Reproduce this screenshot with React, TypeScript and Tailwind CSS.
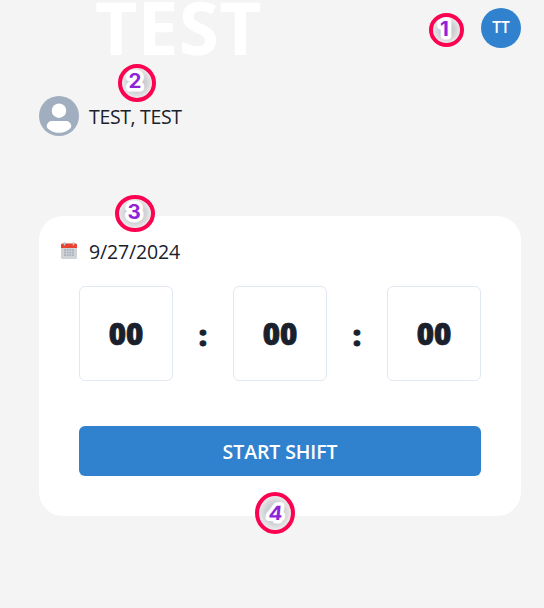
import React from "react";

type MarkerProps = { label: string; w: number; h: number; dx?: number; dy?: number; tilt?: number; place: string };

function Marker({ label, w, h, dx = 0, dy = 0, tilt = 0, place }: MarkerProps) {
  const x = w / 2 + dx;
  const y = h / 2 + 6 + dy;
  return (
    <svg className={`absolute overflow-visible ${place}`} width={w} height={h} viewBox={`0 0 ${w} ${h}`}>
      <defs>
        <radialGradient id={`glow${label}`}>
          <stop offset="0" stopColor="#b8babf" />
          <stop offset="0.6" stopColor="#d3d4d7" />
          <stop offset="1" stopColor="#f4f4f5" />
        </radialGradient>
      </defs>
      <ellipse cx={w / 2} cy={h / 2} rx={w / 2 - 2} ry={h / 2 - 2} fill={`url(#glow${label})`} stroke="#fb0350" strokeWidth="4" />
      <text
        transform={`translate(${x} ${y}) skewX(${tilt}) scale(1.05 1)`}
        textAnchor="middle"
        fontSize="19.5"
        fill="#8f24d6"
        stroke="#fff"
        strokeWidth="7"
        strokeLinejoin="round"
        paintOrder="stroke"
        className="font-['Inter',sans-serif] font-bold"
      >
        {label}
      </text>
    </svg>
  );
}

function UserIcon() {
  return (
    <svg width="40" height="40" viewBox="0 0 40 40">
      <circle cx="20" cy="20" r="20" fill="#a0aec0" />
      <circle cx="20" cy="14.7" r="7.2" fill="#fff" />
      <path d="M7.800 30.500c0-3.500 2.200-5.500 5.700-5.500h13c3.500 0 5.700 2 5.700 5.500 0 2.500-6 6.300-12.200 6.300S7.800 33 7.800 30.500Z" fill="#fff" />
    </svg>
  );
}

function CalendarIcon() {
  return (
    <svg width="16" height="17" viewBox="0 0 16 17" className="relative -top-[2px]">
      <rect x="0" y="1.500" width="16" height="15.500" rx="1.500" fill="#d0d3d6" />
      <path d="M0 6V3q0-1.500 1.500-1.500h13Q16 1.500 16 3v3Z" fill="#e8432f" />
      <path d="M3.500 0v3.500M12.500 0v3.500" stroke="#c4ced5" strokeWidth="1.400" />
      <path d="M3 8h10M3 10.500h10M3 13h10" stroke="#a3afba" strokeWidth="1.400" strokeDasharray="2 .65" fill="none" />
    </svg>
  );
}

function TimeBox() {
  return (
    <div className="flex h-[95px] w-[94px] items-center justify-center rounded-md border border-[#e2e8f0] text-[29.500px] font-extrabold leading-none">
      <span className="[-webkit-text-stroke:0.7px_#1a202c]">00</span>
    </div>
  );
}

function Colon() {
  return (
    <div className="flex w-[60px] justify-center text-[29px] font-extrabold leading-none">
      <span className="relative top-px [-webkit-text-stroke:0.8px_#1a202c]">:</span>
    </div>
  );
}

export default function App() {
  return (
    <div className="relative h-[608px] w-[544px] overflow-hidden bg-[#f4f4f4] font-['Open_Sans','Noto_Sans',sans-serif] text-[#1a202c]">
      <header className="flex h-24 items-start justify-between pl-[95px] pr-[23px]">
        <h1 className="-mt-[23px] text-[73px] font-bold leading-[100px] tracking-[0.3px] text-white">TEST</h1>
        <div className="mt-2 flex size-10 items-center justify-center rounded-full bg-[#3182ce] text-[15.500px] font-semibold text-white">TT</div>
      </header>

      <div className="flex h-10 items-center gap-[10px] pl-[39px]">
        <UserIcon />
        <span className="mt-[2px] text-[19.500px] leading-6 tracking-[-0.35px]">TEST, TEST</span>
      </div>

      <main className="ml-[39px] mr-[23px] mt-20 h-[300px] rounded-[24px] bg-white pt-6">
        <div className="flex h-6 items-center pl-[22px]">
          <CalendarIcon />
          <span className="-mt-px ml-3 text-[19.500px] leading-6 tracking-[-0.15px]">9/27/2024</span>
        </div>
        <div className="mt-[22px] flex items-center px-10">
          <TimeBox />
          <Colon />
          <TimeBox />
          <Colon />
          <TimeBox />
        </div>
        <div className="mt-[45px] px-10">
          <button className="h-[50px] w-full rounded-md bg-[#3182ce] pt-[2px] text-[19.500px] font-semibold leading-6 tracking-[-0.1px] text-white">START SHIFT</button>
        </div>
      </main>

      <Marker label="1" w={35} h={34} dx={-2} dy={-0.5} place="left-[429px] top-[13px]" />
      <Marker label="2" w={38} h={38} dx={-2} dy={-1} place="left-[118px] top-[64px]" />
      <Marker label="3" w={40} h={37} dx={-1} dy={-0.5} place="left-[115px] top-[195px]" />
      <Marker label="4" w={40} h={42} dx={0} dy={1} tilt={-6} place="left-[255px] top-[492px]" />
    </div>
  );
}
